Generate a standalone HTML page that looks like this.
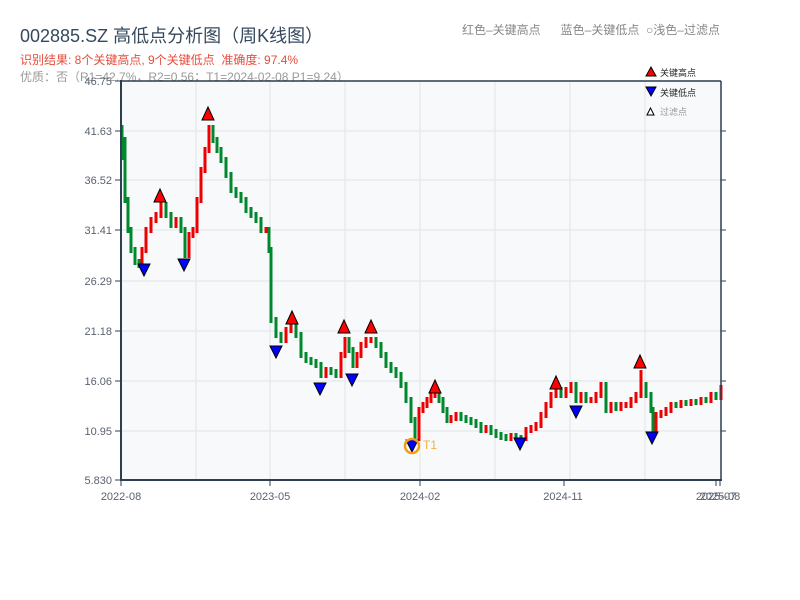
<!DOCTYPE html>
<html><head><meta charset="utf-8"><style>
body{margin:0;width:800px;height:600px;background:#fff;overflow:hidden;font-family:"Liberation Sans","Noto Sans CJK SC",sans-serif;position:relative}
.t{position:absolute;white-space:nowrap}
</style></head><body>
<div class="t" style="left:20px;top:22px;font-size:18px;color:#34495e">002885.SZ 高低点分析图（周K线图）</div>
<div class="t" style="left:20px;top:51px;font-size:12px;color:#e74c3c">识别结果: 8个关键高点, 9个关键低点&nbsp;&nbsp;准确度: 97.4%</div>
<div class="t" style="left:20px;top:68px;font-size:12px;color:#999">优质：否（R1=42.7%，R2=0.56；T1=2024-02-08 P1=9.24）</div>
<div class="t" style="left:462px;top:21px;font-size:12px;color:#888">红色–关键高点&nbsp;&nbsp;&nbsp;&nbsp;&nbsp;&nbsp;蓝色–关键低点&nbsp;&nbsp;○浅色–过滤点</div>
<svg width="800" height="600" style="position:absolute;left:0;top:0" xmlns="http://www.w3.org/2000/svg">
<rect x="121" y="81" width="600" height="399" fill="#f7f9fb"/>
<g stroke="#e2e5ea" stroke-width="1">
<line x1="121" y1="131" x2="721" y2="131"/><line x1="121" y1="180" x2="721" y2="180"/><line x1="121" y1="230" x2="721" y2="230"/><line x1="121" y1="281" x2="721" y2="281"/><line x1="121" y1="331" x2="721" y2="331"/><line x1="121" y1="381" x2="721" y2="381"/><line x1="121" y1="431" x2="721" y2="431"/>
<line x1="196" y1="81" x2="196" y2="480"/><line x1="270" y1="81" x2="270" y2="480"/><line x1="345" y1="81" x2="345" y2="480"/><line x1="420" y1="81" x2="420" y2="480"/><line x1="495" y1="81" x2="495" y2="480"/><line x1="570" y1="81" x2="570" y2="480"/><line x1="645" y1="81" x2="645" y2="480"/>
</g>
<path fill="none" stroke="#00882e" stroke-width="3" d="M122 125V160M125 137V203M128 197V233M131 227V253M135 247V265M139 259V268M166 202V218M171 212V228M181 217V233M185 227V258M213 125V143M217 137V153M221 147V163M226 157V178M231 172V193M236 187V198M241 192V203M246 197V213M251 207V218M256 212V223M261 217V233M269 227V253M271 247V323M276 317V338M281 332V343M296 322V338M301 332V358M306 352V363M311 357V365M316 359V368M321 362V378M331 367V375M336 369V378M349 337V353M353 347V368M376 337V348M381 342V358M386 352V368M391 362V373M396 367V378M401 372V388M406 382V403M411 397V423M415 417V441M439 392V403M443 397V413M447 407V423M461 412V421M466 415V423M471 417V425M476 419V428M481 422V433M491 425V435M496 429V438M501 432V440M506 434V441M516 433V441M521 435V441M561 387V398M576 382V403M586 392V403M606 382V413M616 402V411M646 382V398M651 392V413M653 407V433M676 402V408M686 400V406M696 399V405M706 397V403M716 392V400"/>
<path fill="none" stroke="#e00" stroke-width="3" d="M142 247V268M146 227V253M151 217V233M156 212V223M161 202V218M176 217V228M189 232V258M193 227V238M197 197V233M201 167V203M205 147V173M209 125V153M266 227V233M286 327V343M291 322V333M326 367V378M341 352V378M345 337V358M357 352V368M361 342V358M366 337V348M371 337V343M419 407V441M423 402V413M427 397V408M431 392V403M435 392V398M451 415V423M456 412V421M486 425V433M511 433V441M526 427V441M531 425V433M536 422V431M541 412V428M546 402V418M551 392V408M556 387V398M566 387V398M571 382V393M581 392V403M591 397V403M596 392V403M601 382V398M611 402V413M621 402V411M626 402V408M631 397V408M636 392V403M641 370V398M656 412V433M661 410V418M666 407V416M671 402V413M681 400V408M691 399V406M701 397V405M711 392V403M721 385V400"/>
<g stroke="#000" stroke-width="1">
<polygon points="154,202 160,189 166,202" fill="#f00"/><polygon points="202,120 208,107 214,120" fill="#f00"/><polygon points="286,324 292,311 298,324" fill="#f00"/><polygon points="338,333 344,320 350,333" fill="#f00"/><polygon points="365,333 371,320 377,333" fill="#f00"/><polygon points="429,393 435,380 441,393" fill="#f00"/><polygon points="550,389 556,376 562,389" fill="#f00"/><polygon points="634,368 640,355 646,368" fill="#f00"/>
<polygon points="138,264 144,276 150,264" fill="#00f"/><polygon points="178,259 184,271 190,259" fill="#00f"/><polygon points="270,346 276,358 282,346" fill="#00f"/><polygon points="314,383 320,395 326,383" fill="#00f"/><polygon points="346,374 352,386 358,374" fill="#00f"/><polygon points="406,440 412,452 418,440" fill="#00f"/><polygon points="514,438 520,450 526,438" fill="#00f"/><polygon points="570,406 576,418 582,406" fill="#00f"/><polygon points="646,432 652,444 658,432" fill="#00f"/>
</g>
<circle cx="412" cy="446" r="7" fill="none" stroke="#f39c12" stroke-width="2.5"/>
<text x="423" y="449" font-size="12" fill="#f5b041">T1</text>
<g stroke="#2c3e50"><line x1="121" y1="81" x2="721" y2="81" stroke-width="1.5"/><line x1="121" y1="80" x2="121" y2="481" stroke-width="2"/><line x1="120" y1="480" x2="722" y2="480" stroke-width="2"/><line x1="721" y1="81" x2="721" y2="480" stroke-width="1.5"/>
<g stroke-width="1"><line x1="115" y1="81" x2="121" y2="81"/><line x1="115" y1="131" x2="121" y2="131"/><line x1="115" y1="180" x2="121" y2="180"/><line x1="115" y1="230" x2="121" y2="230"/><line x1="115" y1="281" x2="121" y2="281"/><line x1="115" y1="331" x2="121" y2="331"/><line x1="115" y1="381" x2="121" y2="381"/><line x1="115" y1="431" x2="121" y2="431"/><line x1="115" y1="480" x2="121" y2="480"/>
<line x1="721" y1="131" x2="726" y2="131"/><line x1="721" y1="180" x2="726" y2="180"/><line x1="721" y1="230" x2="726" y2="230"/><line x1="721" y1="281" x2="726" y2="281"/><line x1="721" y1="331" x2="726" y2="331"/><line x1="721" y1="381" x2="726" y2="381"/><line x1="721" y1="431" x2="726" y2="431"/>
<line x1="121" y1="480" x2="121" y2="486"/><line x1="270" y1="480" x2="270" y2="486"/><line x1="420" y1="480" x2="420" y2="486"/><line x1="564" y1="480" x2="564" y2="486"/><line x1="716" y1="480" x2="716" y2="486"/><line x1="720" y1="480" x2="720" y2="486"/></g></g>
<g font-size="11" fill="#5a6270" text-anchor="end">
<text x="112" y="85">46.75</text><text x="112" y="135">41.63</text><text x="112" y="184">36.52</text><text x="112" y="234">31.41</text><text x="112" y="285">26.29</text><text x="112" y="335">21.18</text><text x="112" y="385">16.06</text><text x="112" y="435">10.95</text><text x="112" y="484">5.830</text></g>
<g font-size="11" fill="#5a6270" text-anchor="middle">
<text x="121" y="500">2022-08</text><text x="270" y="500">2023-05</text><text x="420" y="500">2024-02</text><text x="563" y="500">2024-11</text><text x="716" y="500">2025-07</text><text x="720" y="500">2025-08</text></g>
<polygon points="646,76 651,67 656,76" fill="#f00" stroke="#000"/>
<text x="660" y="76" font-size="9" fill="#222">关键高点</text>
<polygon points="646,87 651,96 656,87" fill="#00f" stroke="#000"/>
<text x="660" y="96" font-size="9" fill="#222">关键低点</text>
<polygon points="647,115 650.5,108 654,115" fill="#fff" stroke="#000"/>
<text x="660" y="115" font-size="9" fill="#999">过滤点</text>
</svg>
</body></html>
